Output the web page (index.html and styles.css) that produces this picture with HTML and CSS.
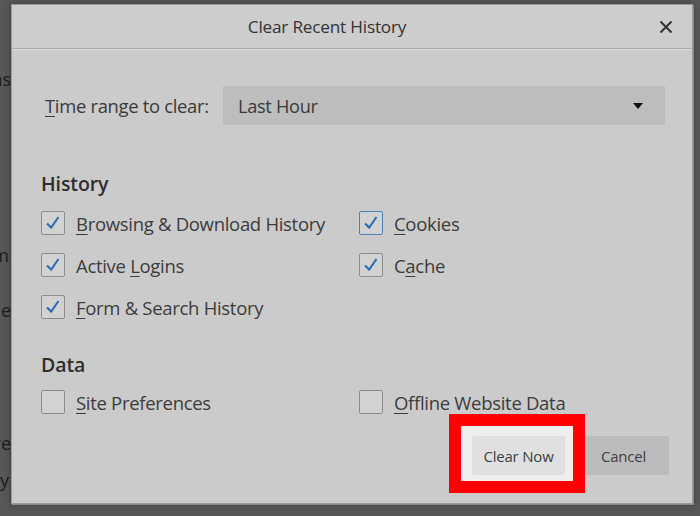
FILE: index.html
```html
<!DOCTYPE html>
<html>
<head>
<meta charset="utf-8">
<link rel="stylesheet" href="styles.css">
</head>
<body>
<div class="page">
  <div class="bg-text">
    <div class="bg-line l1"><span>as</span></div>
    <div class="bg-line l2"><span>m</span></div>
    <div class="bg-line l3"><span>e</span></div>
    <div class="bg-line l4"><span>re</span></div>
    <div class="bg-line l5"><span>y</span></div>
  </div>
  <div class="dialog">
    <div class="titlebar">
      <span class="title">Clear Recent History</span>
      <span class="close">
        <svg width="14" height="14" viewBox="0 0 14 14"><path d="M1.5 1.5L12.5 12.5M12.5 1.5L1.5 12.5" stroke="#333" stroke-width="2" fill="none"/></svg>
      </span>
    </div>
    <div class="content">
      <div class="range-row">
        <span class="label"><u>T</u>ime range to clear:</span>
        <div class="select">
          <span>Last Hour</span>
          <svg class="arrow" width="10" height="6" viewBox="0 0 10 6"><path d="M0 0H10L5 6Z" fill="#111"/></svg>
        </div>
      </div>
      <div class="section-title history">History</div>
      <div class="grid">
        <div class="item"><span class="cb checked"><svg viewBox="0 0 24 24"><path d="M5.5 12.5L10 17L18 5.5" stroke="#2a6db5" stroke-width="2.2" fill="none"/></svg></span><span><u>B</u>rowsing &amp; Download History</span></div>
        <div class="item"><span class="cb checked focus"><svg viewBox="0 0 24 24"><path d="M5.5 12.5L10 17L18 5.5" stroke="#2a6db5" stroke-width="2.2" fill="none"/></svg></span><span><u>C</u>ookies</span></div>
        <div class="item"><span class="cb checked"><svg viewBox="0 0 24 24"><path d="M5.5 12.5L10 17L18 5.5" stroke="#2a6db5" stroke-width="2.2" fill="none"/></svg></span><span>Active <u>L</u>ogins</span></div>
        <div class="item"><span class="cb checked"><svg viewBox="0 0 24 24"><path d="M5.5 12.5L10 17L18 5.5" stroke="#2a6db5" stroke-width="2.2" fill="none"/></svg></span><span>C<u>a</u>che</span></div>
        <div class="item"><span class="cb checked"><svg viewBox="0 0 24 24"><path d="M5.5 12.5L10 17L18 5.5" stroke="#2a6db5" stroke-width="2.2" fill="none"/></svg></span><span><u>F</u>orm &amp; Search History</span></div>
      </div>
      <div class="section-title data">Data</div>
      <div class="grid grid-data">
        <div class="item"><span class="cb"></span><span><u>S</u>ite Preferences</span></div>
        <div class="item"><span class="cb"></span><span><u>O</u>ffline Website Data</span></div>
      </div>
      <div class="buttons">
        <div class="btn-wrap">
          <div class="highlight"></div>
          <button class="btn primary">Clear Now</button>
        </div>
        <button class="btn cancel">Cancel</button>
      </div>
    </div>
  </div>
</div>
</body>
</html>
```
FILE: styles.css
```css
html, body {
  margin: 0;
  padding: 0;
}
body {
  width: 700px;
  height: 516px;
  overflow: hidden;
  background: #575757;
  font-family: "Open Sans", "Noto Sans", sans-serif;
}
.page {
  position: relative;
  width: 700px;
  height: 516px;
  display: flow-root;
}
.bg-text {
  display: flow-root;
  color: #1c1c1c;
  font-size: 18px;
}
.bg-line {
  width: 11px;
  height: 20px;
  line-height: 20px;
  display: flex;
  justify-content: flex-end;
  white-space: nowrap;
}
.l1 { margin-top: 69px; }
.l2 { margin-top: 156px; width: 9px; }
.l3 { margin-top: 35px; }
.l4 { margin-top: 113px; width: 11px; }
.l5 { margin-top: 17px; width: 9px; }

.dialog {
  position: absolute;
  left: 11px;
  top: 4px;
  width: 682px;
  height: 500px;
  background: #cbcbcb;
  border: 1px solid #9a9a9a;
  box-sizing: border-box;
  box-shadow: 1px 1px 0 #8a8a8a, 0 0 6px rgba(0,0,0,0.35);
  color: #3a3a3a;
}
.titlebar {
  height: 43px;
  display: flex;
  align-items: center;
  justify-content: center;
  padding-right: 50px;
  position: relative;
  background: #cdcdcd;
  border-bottom: 1px solid #a9a9a9;
  box-shadow: 0 1px 0 #dadada;
}
.title {
  font-size: 17.2px;
  color: #333;
  letter-spacing: -0.2px;
}
.close {
  position: absolute;
  right: 19px;
  top: 15px;
  width: 14px;
  height: 14px;
  display: flex;
}
.content {
  padding: 37px 23px 0 30px;
}
.range-row {
  display: flex;
  align-items: center;
  padding-left: 3px;
}
.label {
  font-size: 18.4px;
  width: 178px;
  letter-spacing: -0.3px;
}
.select {
  flex: 1;
  height: 39px;
  margin-right: 4px;
  background: #bdbdbd;
  display: flex;
  align-items: center;
  padding: 0 22px 0 15px;
  justify-content: space-between;
  font-size: 18.2px;
  letter-spacing: -0.3px;
}
.section-title {
  font-weight: 600;
  font-size: 19.5px;
  color: #2e2e2e;
  letter-spacing: -0.1px;
  margin-left: -1px;
}
.history { margin-top: 45px; }
.data { margin-top: 32px; }
.grid {
  display: grid;
  grid-template-columns: 318px 1fr;
  row-gap: 18px;
  margin-top: 14px;
}
.grid-data {
  margin-top: 12px;
}
.item {
  display: flex;
  align-items: center;
  height: 24px;
  font-size: 18.5px;
  letter-spacing: -0.3px;
  color: #3c3c3c;
  margin-left: -1px;
}
.cb {
  width: 24px;
  height: 24px;
  box-sizing: border-box;
  border: 1.5px solid #8c8c8c;
  border-radius: 2px;
  background: #d2d2d2;
  margin-right: 11px;
  display: flex;
}
.cb svg { width: 100%; height: 100%; }
.cb.focus {
  border-color: #4a82c0;
}
u {
  text-decoration-thickness: 1px;
  text-underline-offset: 3px;
}
.buttons {
  display: flex;
  justify-content: flex-end;
  align-items: center;
  gap: 13px;
  margin-top: 22px;
}
.btn-wrap {
  position: relative;
  display: flex;
}
.highlight {
  position: absolute;
  left: -23px;
  top: -22px;
  right: -20px;
  bottom: -18px;
  border: 12px solid #ff0000;
  background: #eeeeee;
  z-index: 0;
}
.btn {
  font-family: "Open Sans", "Noto Sans", sans-serif;
  font-size: 15px;
  letter-spacing: -0.2px;
  color: #404040;
  border: none;
  height: 39px;
  border-radius: 2px;
  padding: 0;
}
.primary {
  position: relative;
  z-index: 1;
  width: 93px;
  background: #e0e0e0;
}
.cancel {
  width: 91px;
  background: #bcbcbc;
}
```
